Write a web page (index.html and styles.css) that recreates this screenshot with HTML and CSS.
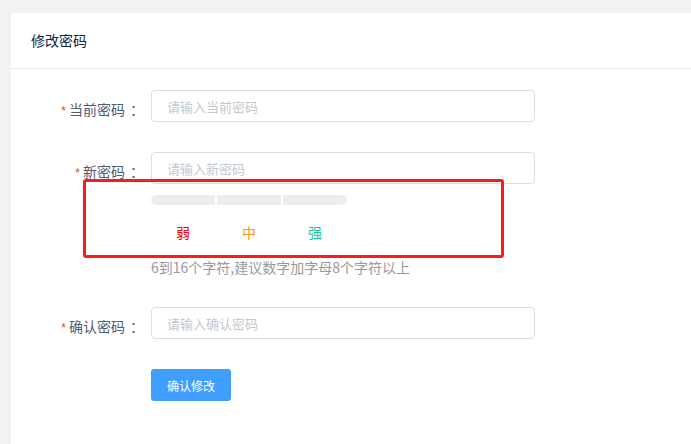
FILE: index.html
```html
<!DOCTYPE html>
<html lang="zh-CN">
<head>
    <meta charset="UTF-8">
    <meta name="viewport" content="width=device-width, initial-scale=1.0">
    <title>修改密码</title>
    <link rel="stylesheet" href="styles.css">
</head>
<body>

<div class="card">
    <div class="card-head">修改密码</div>

    <div class="form">
        <div class="form-item">
            <label class="form-label"><span class="req">*</span>当前密码<span class="colon">：</span></label>
            <div class="form-control">
                <input type="password" placeholder="请输入当前密码">
            </div>
        </div>

        <div class="form-item new-pwd">
            <label class="form-label"><span class="req">*</span>新密码<span class="colon">：</span></label>
            <div class="form-control">
                <input type="password" placeholder="请输入新密码">
                <div class="strength">
                    <div class="strength-bar">
                        <span></span><span></span><span></span>
                    </div>
                    <div class="strength-text">
                        <span class="weak">弱</span>
                        <span class="medium">中</span>
                        <span class="strong">强</span>
                    </div>
                </div>
                <div class="hint">6到16个字符,建议数字加字母8个字符以上</div>
            </div>
            <div class="mark"></div>
        </div>

        <div class="form-item">
            <label class="form-label"><span class="req">*</span>确认密码<span class="colon">：</span></label>
            <div class="form-control">
                <input type="password" placeholder="请输入确认密码">
            </div>
        </div>

        <div class="form-item">
            <div class="form-label"></div>
            <div class="form-control">
                <button>确认修改</button>
            </div>
        </div>
    </div>
</div>

</body>
</html>
```

FILE: styles.css
```css
html, body {
    height: 100%;
}
body {
    font-family: "Noto Sans CJK SC", "Liberation Sans", sans-serif;
    margin: 0;
    padding: 13px 0 0 11px;
    box-sizing: border-box;
    background-color: #f2f2f2;
    color: #515a6e;
    overflow: hidden;
}
.card {
    background: #fff;
    border-radius: 4px 0 0 0;
    height: 100%;
}
.card-head {
    height: 55px;
    line-height: 55px;
    padding-left: 20px;
    font-size: 14px;
    color: #17233d;
    border-bottom: 1px solid #e8eaec;
}
.form {
    padding-top: 21px;
}
.form-item {
    display: flex;
    margin-bottom: 30px;
    position: relative;
}
.form-label {
    width: 140px;
    flex-shrink: 0;
    box-sizing: border-box;
    padding: 9px 12px 0 0;
    text-align: right;
    font-size: 14px;
    line-height: 20px;
    color: #515a6e;
}
.req {
    color: #ed4014;
    font-size: 12px;
    margin-right: 3px;
    font-family: "Liberation Sans", sans-serif;
}
.colon {
    font-family: "Noto Sans CJK TC", sans-serif;
    margin-left: 5px;
    margin-right: -5px;
}
.form-control input {
    width: 384px;
    height: 32px;
    box-sizing: border-box;
    padding: 0 15px;
    border: 1px solid #dcdee2;
    border-radius: 4px;
    font-size: 13px;
    font-family: inherit;
    outline: none;
}
.form-control input::placeholder {
    color: #c5c8ce;
}
.strength {
    margin-top: 11px;
}
.strength-bar {
    display: flex;
    gap: 2px;
    width: 196px;
    height: 10px;
    border-radius: 5px;
    overflow: hidden;
}
.strength-bar span {
    flex: 1;
    background: #ededed;
}
.strength-text {
    display: flex;
    gap: 2px;
    width: 196px;
    margin-top: 17px;
    font-size: 14px;
    line-height: 20px;
}
.strength-text span {
    flex: 1;
    text-align: center;
}
.weak {
    color: #f00;
}
.medium {
    color: #f90;
}
.strong {
    color: #13c6a8;
}
.hint {
    margin-top: 15px;
    font-size: 14px;
    line-height: 20px;
    color: #999;
}
.mark {
    position: absolute;
    left: 72px;
    top: 27px;
    width: 421px;
    height: 79px;
    box-sizing: border-box;
    border: 3px solid #ff1a1a;
    border-radius: 3px;
    pointer-events: none;
}
button {
    width: 80px;
    height: 32px;
    background-color: #409eff;
    color: #fff;
    border: none;
    border-radius: 3px;
    font-size: 12px;
    font-family: inherit;
    cursor: pointer;
}
```
